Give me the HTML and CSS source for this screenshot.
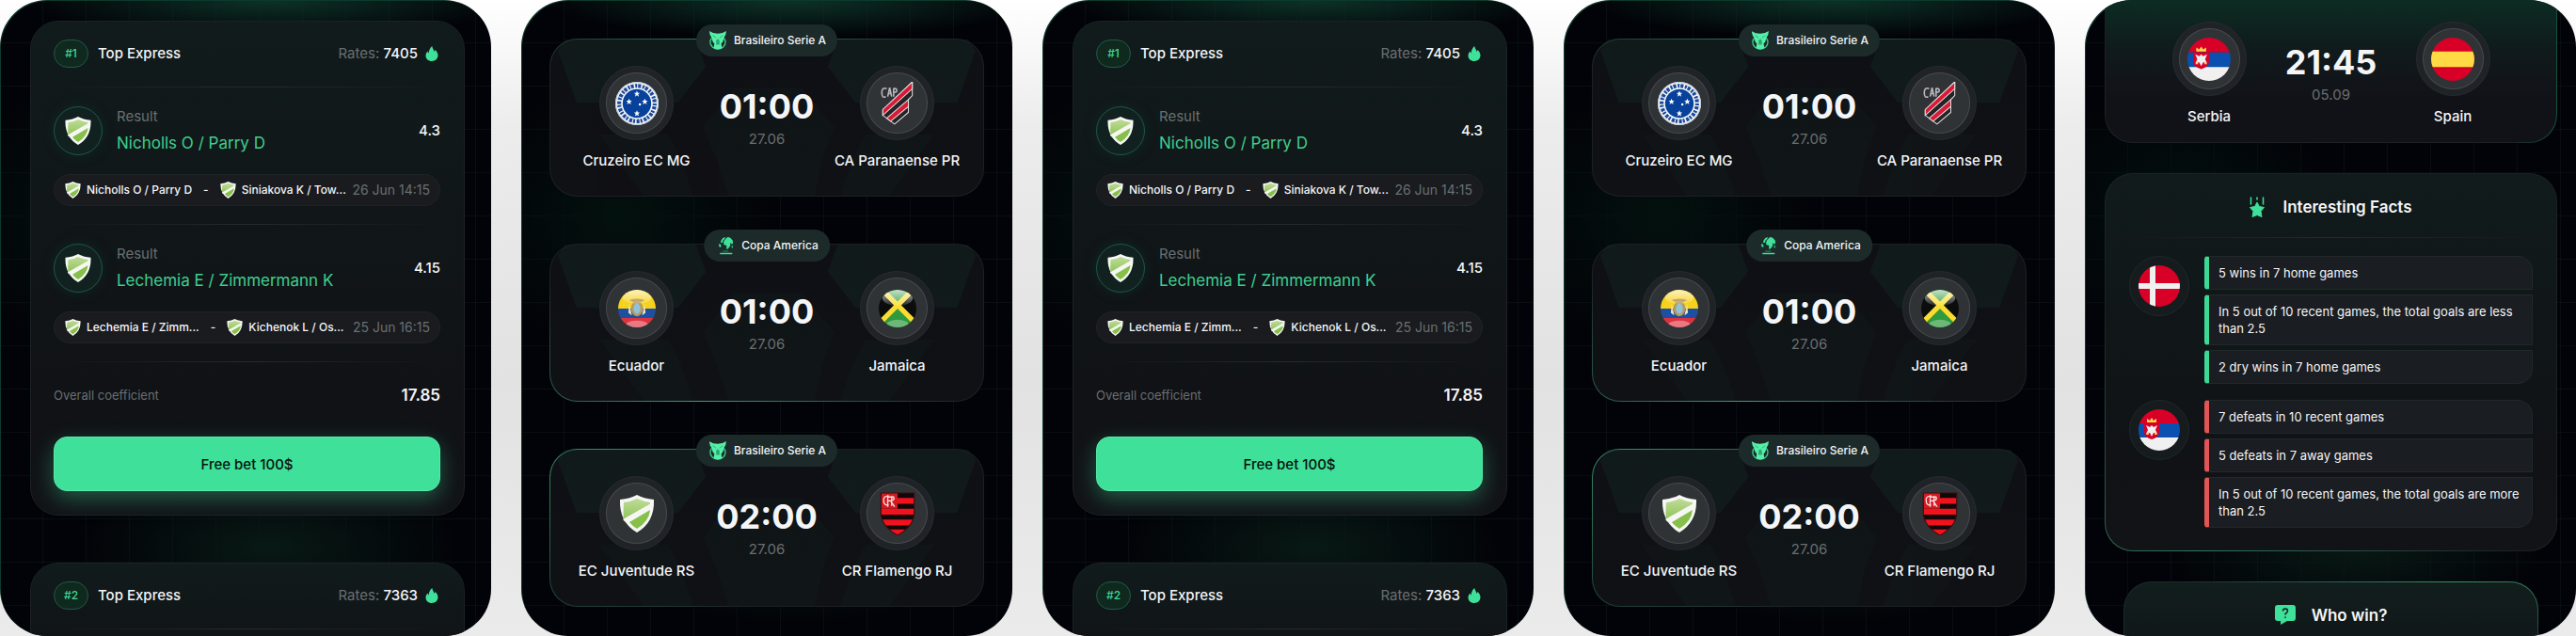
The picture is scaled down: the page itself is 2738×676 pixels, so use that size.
FILE: index.html
```
<!DOCTYPE html>
<html lang="en">
<head>
<meta charset="UTF-8">
<title>Sports Predictions</title>
<link rel="stylesheet" href="styles.css">
</head>
<body>

<!-- Shared drawings -->
<svg class="sprite" aria-hidden="true">
  <defs>
    <linearGradient id="shieldGreen" x1="0" y1="0" x2="0" y2="1">
      <stop offset="0" stop-color="#bfdc97"/>
      <stop offset="1" stop-color="#8cc254"/>
    </linearGradient>
    <linearGradient id="gloss" x1="0" y1="0" x2="0" y2="1">
      <stop offset="0" stop-color="#fff" stop-opacity=".75"/>
      <stop offset="1" stop-color="#fff" stop-opacity=".1"/>
    </linearGradient>
    <clipPath id="round"><circle cx="22" cy="22" r="22"/></clipPath>
    <clipPath id="flaShield"><path d="M5 1H39V22Q38 35 22 44Q6 35 5 22Z"/></clipPath>
  </defs>

  <symbol id="shield" viewBox="0 0 36 40">
    <path d="M18 0Q25 4 36 5Q37 29 18 40Q-1 29 0 5Q11 4 18 0Z" fill="#f6f7f4"/>
    <path d="M18 4Q25 7 32 8Q32 10 32 12L4 28Q3 19 4 8Q12 7 18 4Z" fill="url(#shieldGreen)"/>
    <path d="M32 16Q31 28 18 36Q13 33 10 29Z" fill="#86bf49"/>
    <path d="M3 26L33 9V12L6 29Z" fill="#f6f7f4"/>
  </symbol>

  <symbol id="flame" viewBox="0 0 14 16">
    <path d="M7.300 0C7.700 2.500 9 3.600 9.700 6C10.100 5.300 10.300 4.700 10.400 4C12.500 5.500 13.500 7.700 13.500 9.800C13.500 13.500 10.700 16 7 16S.5 13.500 .5 10.200C.5 8.200 1.500 6.700 2.600 5.500C2.800 6.500 3.200 7.100 3.700 7.500C3.800 4.500 5 2 7.300 0Z" fill="#3ee09a"/>
  </symbol>

  <symbol id="serieA" viewBox="0 0 20 22">
    <ellipse cx="10" cy="13" rx="9" ry="8" fill="none" stroke="#3cc98e" stroke-width="1.500"/>
    <path d="M0 0Q4 3 10 3Q16 3 20 0Q20 5 17 8Q17 12 14 15L15 20Q10 23 5 20L6 15Q3 12 3 8Q0 5 0 0Z" fill="#55f0a8"/>
    <path d="M4 5L8 8M16 5L12 8" stroke="#2ba677"/>
    <path d="M8 11L10 9L12 11V16H8Z" fill="#2ba677"/>
  </symbol>

  <symbol id="globe" viewBox="0 0 18 20">
    <path d="M4 5L6 2L9 1L8 3L6 5L6 7L4 7ZM2 8L4 9L4 12L2 11ZM8 4L11 1Q15 1 17 6L16 9L14 7L14 10L12 13L10 14L10 10L7 9L7 6ZM15 11L17 10L16 13Z" fill="#3ee09a"/>
    <path d="M6 16H12" stroke="#208a60"/>
    <path d="M3 18.500H16" stroke="#3ee09a" stroke-width="1.500"/>
  </symbol>

  <symbol id="cruzeiro" viewBox="0 0 44 44">
    <circle cx="22" cy="22" r="22" fill="#f4f6fa"/>
    <circle cx="22" cy="22" r="18" fill="none" stroke="#1d4a96" stroke-width="4" stroke-dasharray="2 1 3 1.500"/>
    <circle cx="22" cy="22" r="15.500" fill="#f4f6fa"/>
    <circle cx="22" cy="22" r="14.500" fill="#08419b"/>
    <g fill="#fff">
      <path id="star" d="M22 9L22.900 11.200L25 11.200L23.300 12.600L24 15L22 13.600L20 15L20.700 12.600L19 11.200L21.100 11.200Z"/>
      <use href="#star" x="-8" y="8"/>
      <use href="#star" x="8" y="8"/>
      <use href="#star" y="20"/>
      <circle cx="25" cy="23" r="1.200"/>
    </g>
    <circle cx="22" cy="22" r="21.500" fill="none" stroke="#c3cbd8"/>
  </symbol>

  <symbol id="paranaense" viewBox="0 0 44 44">
    <g stroke="#ddd" stroke-width="1">
      <path d="M7 29L37 0V14L33 18V31L19 43L7 34Z" fill="#252326"/>
      <path d="M7 28L37 0V7L7 34Z" fill="#d81a37"/>
      <path d="M11 37L33 18V25L15 40Z" fill="#d81a37"/>
    </g>
    <path d="M11 7Q6 5 6 11Q6 17 10 15M12 15L14 6L16 15M13 12H15M18 15V7Q22 6 21 10L18 11" fill="none" stroke="#b9b9bd" stroke-width="1.500"/>
  </symbol>

  <symbol id="ecuador" viewBox="0 0 44 44">
    <g clip-path="url(#round)">
      <path d="M0 0H44V22H0Z" fill="#f6d21c"/>
      <path d="M0 22H44V33H0Z" fill="#1d4fa3"/>
      <path d="M0 33H44V44H0Z" fill="#dd3341"/>
      <path d="M13 12Q22 9 31 12L27 14H17Z" fill="#a9823e"/>
      <ellipse cx="22" cy="22" rx="7" ry="9" fill="#b89a5c"/>
      <ellipse cx="22" cy="22" rx="4" ry="6" fill="#8fc3dd"/>
      <path d="M13 16L16 30L12 27ZM31 16L28 30L32 27Z" fill="#ece2bf"/>
      <ellipse cx="22" cy="8" rx="17" ry="9" fill="url(#gloss)"/>
      <ellipse cx="22" cy="41" rx="13" ry="5" fill="#fff" opacity=".35"/>
    </g>
  </symbol>

  <symbol id="jamaica" viewBox="0 0 44 44">
    <g clip-path="url(#round)">
      <path d="M0 0H44V44H0Z" fill="#0b0c0c"/>
      <path d="M0 0H44L22 22ZM0 44H44L22 22Z" fill="#2f9a3e"/>
      <path d="M3 -1L47 43M41 -1L-3 43" stroke="#fadd32" stroke-width="6"/>
      <ellipse cx="22" cy="9" rx="18" ry="10" fill="url(#gloss)"/>
      <ellipse cx="22" cy="41" rx="13" ry="6" fill="#fff" opacity=".3"/>
    </g>
  </symbol>

  <symbol id="flamengo" viewBox="0 0 44 44">
    <g clip-path="url(#flaShield)">
      <path d="M0 0H44V44H0Z" fill="#120809"/>
      <path d="M0 6H44V12H0ZM0 17H44V23H0ZM0 28H44V34H0ZM0 38H44V44H0Z" fill="#f0121c"/>
      <path d="M5 1H22V17H5Z" fill="#d41a20"/>
    </g>
    <path d="M13 4Q7 4 8 9Q8 14 13 13M12 3V15M12 5H18Q20 9 12 9M15 9L19 15M16 4V14" fill="none" stroke="#f5dede" stroke-width="1.300"/>
    <path d="M5 1H39V22Q38 35 22 44Q6 35 5 22Z" fill="none" stroke="#3b0d10"/>
  </symbol>

  <symbol id="serbia" viewBox="0 0 44 44">
    <g clip-path="url(#round)">
      <path d="M0 0H44V15H0Z" fill="#d80027"/>
      <path d="M0 15H44V30H0Z" fill="#0b50b0"/>
      <path d="M0 30H44V44H0Z" fill="#f0f0f0"/>
    </g>
    <path d="M6 15H22V24Q22 30 14 32Q6 30 6 24Z" fill="#d80027"/>
    <path d="M14 17L16 19L20 17L18 22L20 26L16 25L14 29L12 25L8 26L10 22L8 17L12 19Z" fill="#f0f0f0"/>
    <path d="M9 10L12 12L14 9L16 12L19 10V14H9Z" fill="#ffda44"/>
    <path d="M8 27L10 24L11 27ZM20 27L18 24L17 27Z" fill="#ffda44"/>
  </symbol>

  <symbol id="spain" viewBox="0 0 44 44">
    <g clip-path="url(#round)">
      <path d="M0 0H44V44H0Z" fill="#d80027"/>
      <path d="M0 14H44V30H0Z" fill="#ffda44"/>
    </g>
  </symbol>

  <symbol id="denmark" viewBox="0 0 44 44">
    <g clip-path="url(#round)">
      <path d="M0 0H44V44H0Z" fill="#d80027"/>
      <path d="M12 0H18V44H12ZM0 19H44V25H0Z" fill="#f0f0f0"/>
    </g>
  </symbol>

  <symbol id="fallingStar" viewBox="0 0 16 22">
    <path d="M1.500 1V8M8 1V3M14.500 1V8" stroke="#3ee09a" stroke-width="1.500" stroke-linecap="round"/>
    <path d="M8 6L10.300 10.500L15.500 11.500L12 15.500L13 21.500L8 19.500L3 21.500L4 15.500L.5 11.500L5.700 10.500Z" fill="#3ee09a" stroke="#3ee09a" stroke-linejoin="round"/>
  </symbol>

  <symbol id="question" viewBox="0 0 22 22">
    <path d="M3 0H19Q22 0 22 3V14Q22 17 19 17H13L6 21V17H3Q0 17 0 14V3Q0 0 3 0Z" fill="#3ee09a"/>
    <path d="M8.500 6.500Q8.500 4 11 4T13.500 6.500Q13.500 8 11 9.500V10.500M11 12.500V14" fill="none" stroke="#10201b" stroke-width="1.500"/>
  </symbol>

  <symbol id="pattern" viewBox="0 0 462 168" preserveAspectRatio="none">
    <g fill="#16332b" opacity=".3">
      <path d="M8 12L16 0H155L166 29L136 68H28Z"/>
      <path d="M454 12L446 0H307L296 29L326 68H434Z"/>
    </g>
    <g fill="#16332b" opacity=".12">
      <path d="M196 52H268L303 94L290 130L282 168H190L178 130L163 94Z"/>
      <path d="M52 102H125Q140 125 152 168H100Z"/>
      <path d="M410 102H337Q322 125 310 168H362Z"/>
    </g>
  </symbol>
</svg>

<main class="screens">

  <section class="phone">
    <article class="card express">
      <header class="express-head">
        <span class="number">#1</span>
        <h2>Top Express</h2>
        <p class="rates">Rates: <b>7405</b></p>
        <svg class="flame"><use href="#flame"/></svg>
      </header>
      <div class="bet">
        <div class="bet-row">
          <span class="ring"><svg><use href="#shield"/></svg></span>
          <div class="pick">
            <small>Result</small>
            <p>Nicholls O / Parry D</p>
          </div>
          <b>4.3</b>
        </div>
        <div class="game">
          <svg><use href="#shield"/></svg><span>Nicholls O / Parry D</span>
          <i>-</i>
          <svg><use href="#shield"/></svg><span>Siniakova K / Tow...</span>
          <time>26 Jun 14:15</time>
        </div>
      </div>
      <div class="bet">
        <div class="bet-row">
          <span class="ring"><svg><use href="#shield"/></svg></span>
          <div class="pick">
            <small>Result</small>
            <p>Lechemia E / Zimmermann K</p>
          </div>
          <b>4.15</b>
        </div>
        <div class="game">
          <svg><use href="#shield"/></svg><span>Lechemia E / Zimm...</span>
          <i>-</i>
          <svg><use href="#shield"/></svg><span>Kichenok L / Os...</span>
          <time>25 Jun 16:15</time>
        </div>
      </div>
      <div class="overall">
        <span>Overall coefficient</span>
        <b>17.85</b>
      </div>
      <button type="button">Free bet 100$</button>
    </article>
    <article class="card express">
      <header class="express-head">
        <span class="number">#2</span>
        <h2>Top Express</h2>
        <p class="rates">Rates: <b>7363</b></p>
        <svg class="flame"><use href="#flame"/></svg>
      </header>
      <div class="bet"></div>
    </article>
  </section>

  <section class="phone phone-matches">
    <article class="match glow-top">
      <svg class="pattern"><use href="#pattern"/></svg>
      <span class="league"><svg><use href="#serieA"/></svg>Brasileiro Serie A</span>
      <div class="team"><span class="crest"><svg><use href="#cruzeiro"/></svg></span><p>Cruzeiro EC MG</p></div>
      <div class="when"><strong>01:00</strong><time>27.06</time></div>
      <div class="team"><span class="crest"><svg><use href="#paranaense"/></svg></span><p>CA Paranaense PR</p></div>
    </article>
    <article class="match glow-bottom">
      <svg class="pattern"><use href="#pattern"/></svg>
      <span class="league"><svg><use href="#globe"/></svg>Copa America</span>
      <div class="team"><span class="crest"><svg class="flag"><use href="#ecuador"/></svg></span><p>Ecuador</p></div>
      <div class="when"><strong>01:00</strong><time>27.06</time></div>
      <div class="team"><span class="crest"><svg class="flag"><use href="#jamaica"/></svg></span><p>Jamaica</p></div>
    </article>
    <article class="match glow-left">
      <svg class="pattern"><use href="#pattern"/></svg>
      <span class="league"><svg><use href="#serieA"/></svg>Brasileiro Serie A</span>
      <div class="team"><span class="crest"><svg class="flag"><use href="#shield"/></svg></span><p>EC Juventude RS</p></div>
      <div class="when"><strong>02:00</strong><time>27.06</time></div>
      <div class="team"><span class="crest"><svg><use href="#flamengo"/></svg></span><p>CR Flamengo RJ</p></div>
    </article>
  </section>

  <section class="phone">
    <article class="card express">
      <header class="express-head">
        <span class="number">#1</span>
        <h2>Top Express</h2>
        <p class="rates">Rates: <b>7405</b></p>
        <svg class="flame"><use href="#flame"/></svg>
      </header>
      <div class="bet">
        <div class="bet-row">
          <span class="ring"><svg><use href="#shield"/></svg></span>
          <div class="pick">
            <small>Result</small>
            <p>Nicholls O / Parry D</p>
          </div>
          <b>4.3</b>
        </div>
        <div class="game">
          <svg><use href="#shield"/></svg><span>Nicholls O / Parry D</span>
          <i>-</i>
          <svg><use href="#shield"/></svg><span>Siniakova K / Tow...</span>
          <time>26 Jun 14:15</time>
        </div>
      </div>
      <div class="bet">
        <div class="bet-row">
          <span class="ring"><svg><use href="#shield"/></svg></span>
          <div class="pick">
            <small>Result</small>
            <p>Lechemia E / Zimmermann K</p>
          </div>
          <b>4.15</b>
        </div>
        <div class="game">
          <svg><use href="#shield"/></svg><span>Lechemia E / Zimm...</span>
          <i>-</i>
          <svg><use href="#shield"/></svg><span>Kichenok L / Os...</span>
          <time>25 Jun 16:15</time>
        </div>
      </div>
      <div class="overall">
        <span>Overall coefficient</span>
        <b>17.85</b>
      </div>
      <button type="button">Free bet 100$</button>
    </article>
    <article class="card express">
      <header class="express-head">
        <span class="number">#2</span>
        <h2>Top Express</h2>
        <p class="rates">Rates: <b>7363</b></p>
        <svg class="flame"><use href="#flame"/></svg>
      </header>
      <div class="bet"></div>
    </article>
  </section>

  <section class="phone phone-matches">
    <article class="match glow-top">
      <svg class="pattern"><use href="#pattern"/></svg>
      <span class="league"><svg><use href="#serieA"/></svg>Brasileiro Serie A</span>
      <div class="team"><span class="crest"><svg><use href="#cruzeiro"/></svg></span><p>Cruzeiro EC MG</p></div>
      <div class="when"><strong>01:00</strong><time>27.06</time></div>
      <div class="team"><span class="crest"><svg><use href="#paranaense"/></svg></span><p>CA Paranaense PR</p></div>
    </article>
    <article class="match glow-bottom">
      <svg class="pattern"><use href="#pattern"/></svg>
      <span class="league"><svg><use href="#globe"/></svg>Copa America</span>
      <div class="team"><span class="crest"><svg class="flag"><use href="#ecuador"/></svg></span><p>Ecuador</p></div>
      <div class="when"><strong>01:00</strong><time>27.06</time></div>
      <div class="team"><span class="crest"><svg class="flag"><use href="#jamaica"/></svg></span><p>Jamaica</p></div>
    </article>
    <article class="match glow-left">
      <svg class="pattern"><use href="#pattern"/></svg>
      <span class="league"><svg><use href="#serieA"/></svg>Brasileiro Serie A</span>
      <div class="team"><span class="crest"><svg class="flag"><use href="#shield"/></svg></span><p>EC Juventude RS</p></div>
      <div class="when"><strong>02:00</strong><time>27.06</time></div>
      <div class="team"><span class="crest"><svg><use href="#flamengo"/></svg></span><p>CR Flamengo RJ</p></div>
    </article>
  </section>

  <section class="phone phone-facts">
    <article class="match match-open">
      <div class="team"><span class="crest"><svg><use href="#serbia"/></svg></span><p>Serbia</p></div>
      <div class="when"><strong>21:45</strong><time>05.09</time></div>
      <div class="team"><span class="crest"><svg><use href="#spain"/></svg></span><p>Spain</p></div>
    </article>
    <article class="card facts">
      <h2><svg class="star"><use href="#fallingStar"/></svg>Interesting Facts</h2>
      <div class="fact-group">
        <span class="country"><svg><use href="#denmark"/></svg></span>
        <ul class="good">
          <li>5 wins in 7 home games</li>
          <li>In 5 out of 10 recent games, the total goals are less than 2.5</li>
          <li>2 dry wins in 7 home games</li>
        </ul>
      </div>
      <div class="fact-group">
        <span class="country"><svg><use href="#serbia"/></svg></span>
        <ul class="bad">
          <li>7 defeats in 10 recent games</li>
          <li>5 defeats in 7 away games</li>
          <li>In 5 out of 10 recent games, the total goals are more than 2.5</li>
        </ul>
      </div>
    </article>
    <article class="card poll">
      <h2><svg class="question"><use href="#question"/></svg>Who win?</h2>
    </article>
  </section>

</main>

</body>
</html>
```
FILE: styles.css
```
* {
  box-sizing: border-box;
}
body {
  margin: 0;
  font-family: Inter, "Liberation Sans", sans-serif;
  font-size: 15px;
  line-height: 20px;
  color: #f4f5f7;
  background: linear-gradient(#fff, #ececec 20%, #e2e2e2 60%, #ebebeb);
}
h2, p, ul {
  margin: 0;
  padding: 0;
}
h2 {
  font-size: 15px;
  font-weight: 500;
}
svg {
  flex-shrink: 0;
}
.sprite {
  position: absolute;
  width: 0;
  height: 0;
}
.screens {
  display: grid;
  grid-template-columns: repeat(5, 1fr);
  gap: 32px;
  height: 100vh;
}

/* Phone screens */
.phone {
  display: flex;
  flex-direction: column;
  gap: 50px;
  min-height: 0;
  padding: 22px 28px 0 32px;
  overflow: hidden;
  border-radius: 50px;
  box-shadow: inset 1px 1px 0 #0b3a2b;
  background:
    radial-gradient(260px 40px at 55% 0, #0d3327, transparent),
    radial-gradient(200px 80px at 55% 86%, #081914, transparent),
    radial-gradient(160px 140px at 20% 34%, #03110e, transparent),
    repeating-linear-gradient(90deg, transparent 0 45px, rgba(120, 200, 170, .05) 45px 46px),
    repeating-linear-gradient(transparent 0 45px, rgba(120, 200, 170, .05) 45px 46px),
    #020308;
}
.phone-matches {
  padding: 41px 30px 0;
}
.phone-facts {
  gap: 32px;
  padding: 0 20px 0 21px;
}

.card {
  flex-shrink: 0;
  border: 1px solid #1b2224;
  border-radius: 30px;
  background: linear-gradient(#111b1b, #101216 75%, #121317);
}

/* Express bets */
.express {
  padding: 19px 25px 25px 24px;
}
.express-head {
  display: flex;
  align-items: center;
  height: 30px;
  margin-bottom: 20px;
}
.number {
  width: 37px;
  margin-right: 10px;
  border: 1px solid #22584a;
  border-radius: 15px;
  background: #10291f;
  color: #3fd795;
  font-size: 12px;
  font-weight: 500;
  line-height: 28px;
  text-align: center;
}
.rates {
  margin-left: auto;
  color: #696f71;
}
.rates b {
  color: #f4f5f7;
  font-weight: 500;
}
.flame {
  width: 14px;
  height: 16px;
  margin: 0 2px 0 8px;
}
.bet, .overall {
  border-top: 1px solid;
  border-image: linear-gradient(90deg, transparent, #252b2d, transparent) 1;
}
.bet {
  padding: 20px 0 19px;
}
.bet-row {
  display: flex;
  align-items: center;
  height: 52px;
  margin-bottom: 20px;
}
.bet-row b {
  font-weight: 500;
}
.ring {
  display: flex;
  align-items: center;
  justify-content: center;
  width: 52px;
  height: 52px;
  margin-right: 15px;
  border: 1px solid #1f5645;
  border-radius: 50%;
  background: #11211f;
  box-shadow: 0 0 12px #10281f;
}
.ring svg {
  width: 28px;
  height: 30px;
}
.pick {
  flex: 1;
}
.pick small {
  display: block;
  margin-bottom: 6px;
  color: #696f71;
  font-size: 15px;
}
.pick p {
  color: #3fce8f;
  font-size: 17px;
  line-height: 24px;
}
.game {
  display: flex;
  align-items: center;
  height: 34px;
  padding: 0 10px 0 11px;
  border: 1px solid #1f2427;
  border-radius: 17px;
  background: #191b1f;
  font-size: 12px;
  font-weight: 500;
  white-space: nowrap;
}
.game svg {
  width: 17px;
  height: 18px;
  margin-right: 6px;
}
.game i {
  margin: 0 12px;
  font-style: normal;
}
.game time {
  margin-left: auto;
  color: #696f71;
  font-size: 14px;
  font-weight: 400;
}
.overall {
  display: flex;
  align-items: center;
  justify-content: space-between;
  height: 80px;
  padding-bottom: 10px;
}
.overall span {
  color: #696f71;
  font-size: 13px;
}
.overall b {
  font-size: 17px;
  font-weight: 600;
}
button {
  width: 100%;
  height: 58px;
  border: 1px solid #58eaaa;
  border-radius: 14px;
  background: #3ee09a;
  box-shadow: 0 8px 22px rgba(62, 224, 154, .35);
  color: #08110d;
  font: 500 15px Inter, "Liberation Sans", sans-serif;
}

/* Matches */
.match {
  position: relative;
  display: flex;
  justify-content: center;
  flex-shrink: 0;
  gap: 4px;
  height: 168px;
  padding: 28px 4px 0;
  border: 1px solid transparent;
  border-radius: 30px;
  background:
    linear-gradient(#0f1015, #101115) padding-box,
    #1c1f23 border-box;
}
.glow-top {
  background:
    linear-gradient(#0f1015, #101115) padding-box,
    radial-gradient(240px 60px at 40% 0, #24805b, #1c1f23) border-box;
}
.glow-bottom {
  background:
    linear-gradient(#0f1015, #101115) padding-box,
    radial-gradient(280px 160px at 35% 100%, #3a9e72, #1c1f23) border-box;
}
.glow-left {
  background:
    linear-gradient(#0f1015, #101115) padding-box,
    radial-gradient(260px 200px at 10% 10%, #349468, #1c1f23) border-box;
}
.pattern {
  position: absolute;
  inset: 0;
  width: 100%;
  height: 100%;
}
.league {
  position: absolute;
  top: -16px;
  left: 50%;
  display: flex;
  align-items: center;
  gap: 8px;
  height: 34px;
  padding: 0 12px 0 14px;
  border-radius: 17px;
  background: #1c2b2a;
  font-size: 12px;
  font-weight: 500;
  white-space: nowrap;
  transform: translateX(-50%);
}
.league svg {
  width: 18px;
  height: 20px;
}
.team {
  position: relative;
  width: 160px;
  font-weight: 500;
  text-align: center;
}
.crest {
  display: flex;
  align-items: center;
  justify-content: center;
  width: 79px;
  height: 79px;
  margin: 0 auto 12px;
  border: 1px solid #282c2f;
  border-radius: 50%;
  background: radial-gradient(circle, #303335 0 31px, #45494c 32px, #1f2226 33px);
}
.crest svg {
  width: 46px;
  height: 46px;
}
.crest .flag {
  width: 40px;
  height: 40px;
}
.when {
  position: relative;
  width: 109px;
  text-align: center;
}
.when strong {
  display: block;
  margin: 21px 0 3px;
  font-size: 36px;
  font-weight: 700;
  line-height: 44px;
}
.when time {
  display: block;
  color: #696f71;
}
.match-open {
  height: 152px;
  padding-top: 23px;
  border-top: 0;
  border-radius: 0 0 30px 30px;
  background:
    linear-gradient(#0c2c22, #101a1c 35%, #111217 70%) padding-box,
    linear-gradient(90deg, #1c1f23 90%, #14523c) border-box;
}
.match-open .team {
  width: 142px;
}

/* Facts */
.facts {
  padding: 20px 25px 24px;
  border-color: transparent;
  background:
    linear-gradient(#111b1b, #101216 75%, #121317) padding-box,
    radial-gradient(340px 260px at 20% 100%, #2f7a5c, #1b2224) border-box;
}
.facts h2, .poll h2 {
  display: flex;
  align-items: center;
  justify-content: center;
  height: 30px;
  font-size: 17px;
  font-weight: 600;
}
.facts h2 {
  height: 48px;
  margin-bottom: 19px;
  padding-bottom: 18px;
  border-bottom: 1px solid;
  border-image: linear-gradient(90deg, transparent, #252b2d, transparent) 1;
}
.star {
  width: 16px;
  height: 22px;
  margin-right: 19px;
}
.question {
  width: 22px;
  height: 22px;
  margin-right: 17px;
}
.fact-group {
  display: flex;
  gap: 16px;
}
.fact-group + .fact-group {
  margin-top: 17px;
}
.country {
  display: flex;
  align-items: center;
  justify-content: center;
  width: 64px;
  height: 64px;
  border: 1px solid #20272a;
  border-radius: 50%;
  background: #161b1e;
}
.country svg {
  width: 44px;
  height: 44px;
}
.fact-group ul {
  display: flex;
  flex: 1;
  flex-direction: column;
  gap: 5px;
  font-size: 13px;
  line-height: 18px;
  list-style: none;
}
.fact-group li {
  padding: 8px 10px;
  border: 1px solid #20282a;
  border-left: 5px solid #3ed895;
  border-radius: 4px 0 0 4px;
  background: #1a1d21;
}
.fact-group .bad li {
  border-left-color: #e05555;
}
.fact-group li:first-child {
  border-top-right-radius: 16px;
}
.fact-group li:last-child {
  border-bottom-right-radius: 16px;
}

.poll {
  height: 120px;
  margin: 0 20px;
  padding-top: 20px;
  border-color: transparent;
  background:
    linear-gradient(#111e1c, #101216) padding-box,
    radial-gradient(300px 80px at 80% 0, #36906a, #1b2a28) border-box;
}
```
